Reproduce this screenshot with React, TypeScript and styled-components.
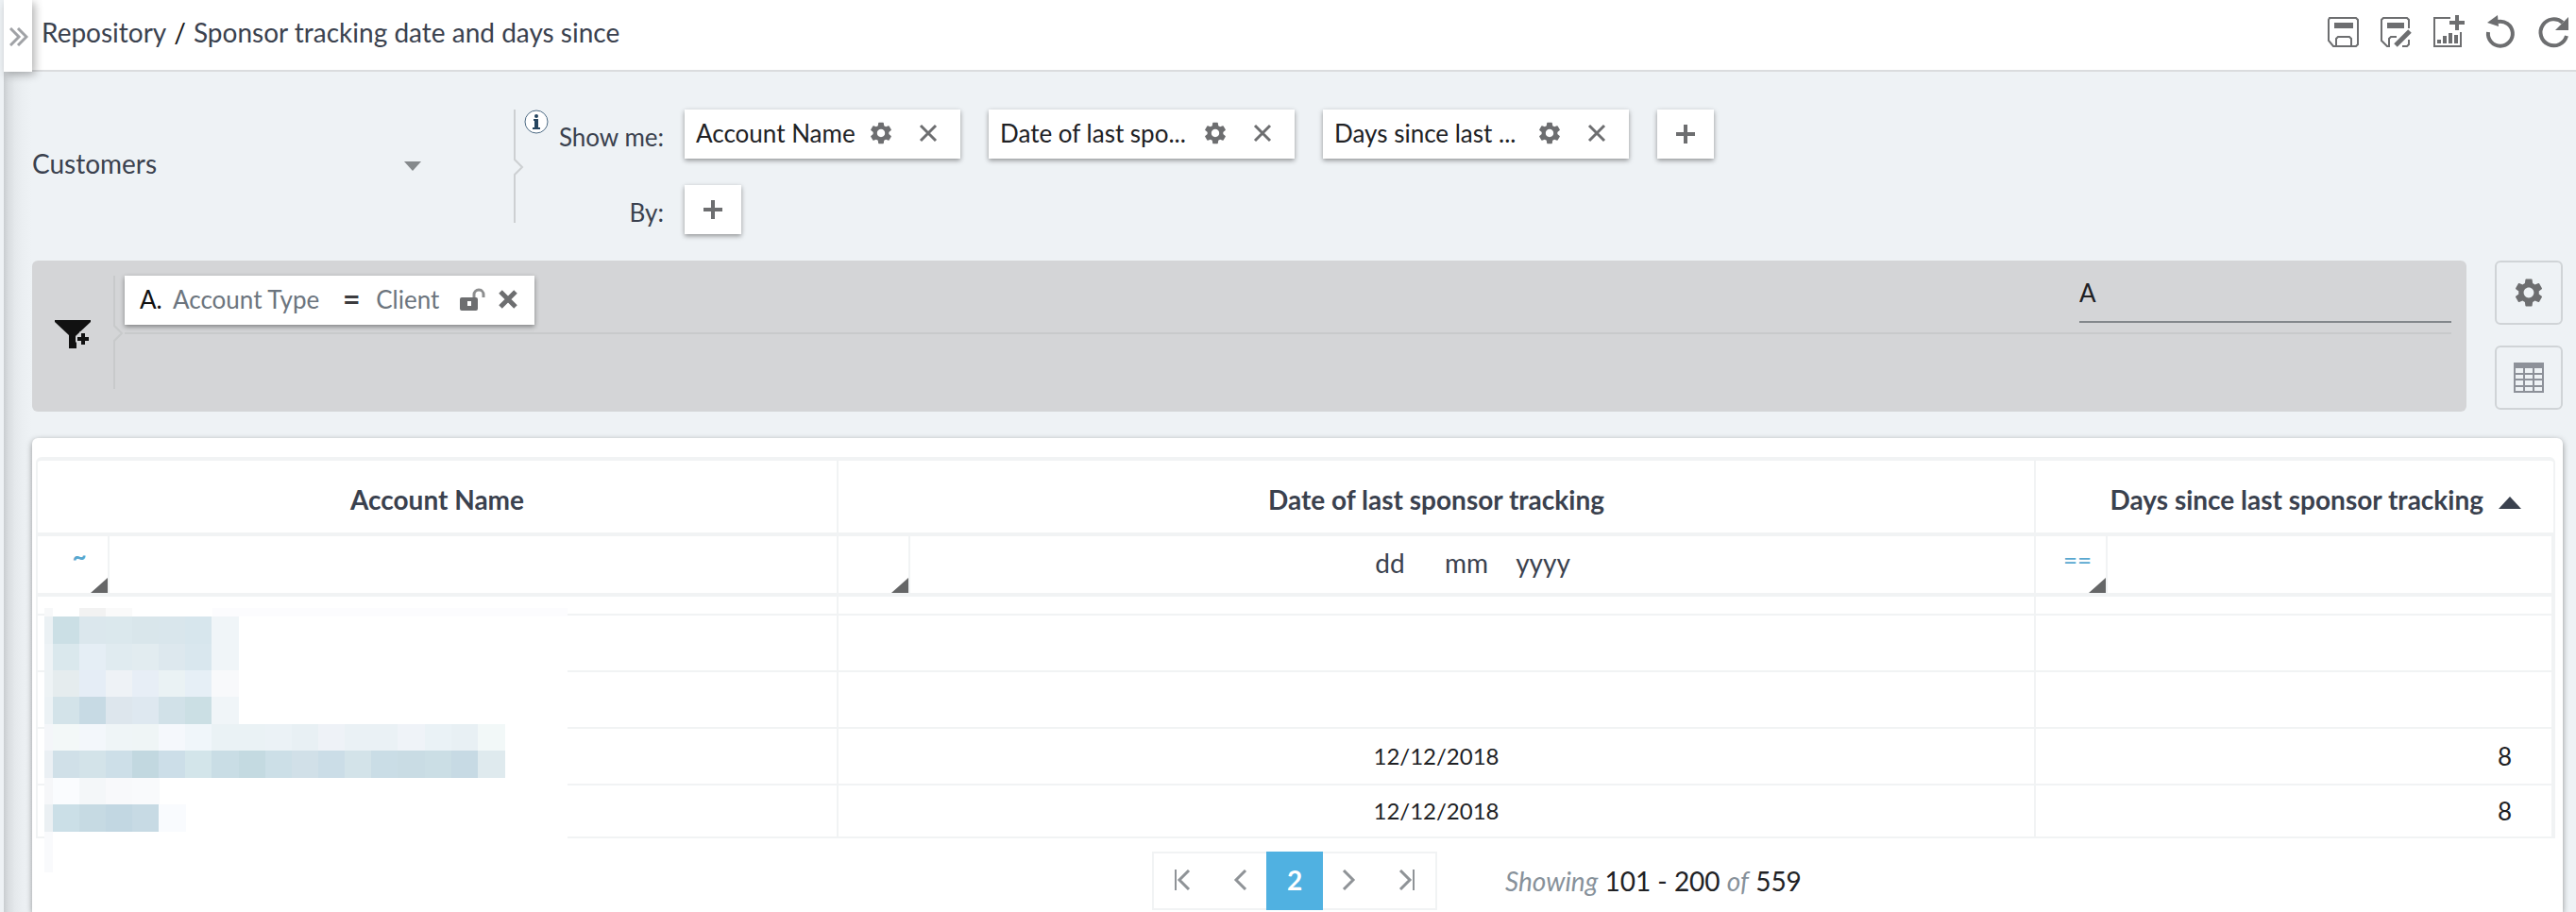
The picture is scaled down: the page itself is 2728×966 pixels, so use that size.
import React from "react";
import styled, { createGlobalStyle, css } from "styled-components";
import { MdSettings } from "react-icons/md";

const GlobalStyle = createGlobalStyle`
  *, *::before, *::after { box-sizing: border-box; }
  body {
    margin: 0;
    background: #eef2f5;
    font-family: Lato, "Liberation Sans", sans-serif;
    font-size: 26px;
    line-height: 32px;
    color: #202124;
  }
  button, input, select { font: inherit; color: inherit; }
  button { cursor: pointer; }
`;

const ink = "#3a414e";
const line = "#f1f3f4";
const iconGrey = "#6d6e70";

const Shell = styled.div`
  display: flex;
  min-height: 100vh;
  padding-left: 4px;
`;

const Main = styled.main`
  flex: 1;
  min-width: 0;
  display: flex;
  flex-direction: column;
  background: linear-gradient(90deg, #c9cdd0 0, #d9dde0 5px, #e5e9ec 12px, #ebeff2 20px, #eef2f5 30px);
`;

const TopBar = styled.header`
  display: flex;
  align-items: center;
  height: 76px;
  padding-right: 6px;
  background: #fff;
  border-bottom: 2px solid #dadcde;
`;

const Flap = styled.button`
  position: relative;
  z-index: 1;
  align-self: flex-start;
  width: 30px;
  height: 76px;
  padding: 2px 0 0;
  border: 0;
  background: #fff;
  box-shadow: 3px 3px 10px rgba(0, 0, 0, 0.3);
  svg { display: block; margin: 0 auto 0 6px; }
`;

const Crumbs = styled.nav`
  display: flex;
  gap: 8px;
  flex: 1;
  padding-left: 10px;
  padding-bottom: 6px;
  font-size: 28px;
  color: ${ink};
  a { color: inherit; text-decoration: none; }
`;

const Slash = styled.span`
  color: #111;
`;

const Tools = styled.div`
  display: flex;
  gap: 20px;
  padding-bottom: 6px;
`;

const IconButton = styled.button`
  display: grid;
  place-items: center;
  padding: 0;
  border: 0;
  background: none;
  color: ${iconGrey};
  svg { display: block; }
`;

const Query = styled.section`
  display: flex;
  padding: 40px 14px 28px 30px;
`;

const SourceBox = styled.div`
  display: grid;
  align-items: center;
  width: 412px;
  margin-right: 98px;
  height: 120px;
`;

const SourceSelect = styled.select`
  grid-area: 1 / 1;
  appearance: none;
  width: 100%;
  padding: 0 0 6px;
  border: 0;
  background: none;
  font-size: 28px;
  color: ${ink};
`;

const Caret = styled.svg`
  grid-area: 1 / 1;
  justify-self: end;
  pointer-events: none;
`;

const InfoButton = styled(IconButton)`
  align-self: flex-start;
`;

const Fields = styled.div`
  display: grid;
  grid-template-columns: 122px auto;
  column-gap: 22px;
  row-gap: 28px;
`;

const FieldLabel = styled.span`
  padding-top: 13px;
  text-align: right;
  white-space: nowrap;
  color: ${ink};
`;

const Chips = styled.div`
  display: flex;
  gap: 30px;
`;

const raised = css`
  height: 52px;
  border: 0;
  background: #fff;
  box-shadow: 0 2px 5px rgba(0, 0, 0, 0.4);
`;

const Chip = styled.div<{ $wide?: boolean }>`
  ${raised}
  display: flex;
  align-items: center;
  justify-content: space-between;
  width: ${p => (p.$wide ? 324 : 292)}px;
  padding: 0 24px 2px 12px;
`;

const ChipText = styled.span`
  white-space: nowrap;
`;

const ChipActions = styled.div`
  display: flex;
  gap: 26px;
`;

const AddButton = styled.button`
  ${raised}
  display: grid;
  place-items: center;
  width: 60px;
  padding: 0;
  color: ${iconGrey};
`;

const FilterRow = styled.section`
  display: flex;
  align-items: flex-start;
  gap: 30px;
  padding: 0 14px 28px 30px;
`;

const FilterPanel = styled.div`
  flex: 1;
  display: flex;
  height: 160px;
  padding: 16px 16px 0 24px;
  border-radius: 6px;
  background: #d4d5d7;
`;

const FunnelButton = styled(IconButton)`
  align-self: flex-start;
  margin-top: 46px;
  margin-right: 24px;
`;

const FilterLines = styled.div`
  flex: 1;
  display: flex;
  justify-content: space-between;
  height: 62px;
  margin-left: 1px;
  border-bottom: 2px solid #c8cacb;
`;

const FilterChip = styled.div`
  ${raised}
  display: flex;
  align-items: center;
  padding: 0 18px 2px 16px;
  color: #6c757e;
  white-space: nowrap;
`;

const FilterLetter = styled.span`
  width: 35px;
  color: #111;
`;

const Operator = styled.span`
  width: 60px;
  padding-left: 8px;
  text-align: center;
  font-size: 32px;
  font-weight: 700;
  color: #3c3c3f;
`;

const FilterValue = styled.span`
  margin-right: 22px;
`;

const FilterActions = styled.div`
  display: flex;
  gap: 14px;
`;

const LogicInput = styled.input`
  width: 394px;
  height: 50px;
  padding: 0 0 12px;
  border: 0;
  border-bottom: 2px solid #83888c;
  border-radius: 0;
  background: none;
  color: #202124;
`;

const SideTools = styled.div`
  display: flex;
  flex-direction: column;
  gap: 22px;
`;

const SquareButton = styled(IconButton)`
  width: 72px;
  height: 68px;
  border: 2px solid #d0d4d7;
  border-radius: 6px;
`;

const Card = styled.section`
  position: relative;
  flex: 1;
  margin: 0 14px 0 30px;
  padding: 20px 8px 2px 4px;
  border-radius: 6px 6px 0 0;
  background: #fff;
  box-shadow: 0 2px 6px rgba(0, 0, 0, 0.4);
`;

const Table = styled.table`
  width: 100%;
  table-layout: fixed;
  border-spacing: 0;
  border: 2px solid ${line};
  border-top-width: 4px;
  border-radius: 6px 6px 0 0;
  th, td { padding: 0; }
  th:not(:last-child), td { border-right: 2px solid ${line}; }
`;

const HeadCell = styled.th<{ $right?: boolean }>`
  height: 80px;
  border-bottom: 4px solid ${line};
  font-size: 28px;
  font-weight: 700;
  color: ${ink};
  text-align: ${p => (p.$right ? "right" : "center")};
`;

const SortButton = styled.button<{ $right?: boolean }>`
  padding: 12px ${p => (p.$right ? 34 : 0)}px 6px 0;
  border: 0;
  background: none;
  svg { margin-left: 16px; vertical-align: 1px; }
`;

const FilterCell = styled.td`
  height: 64px;
  border-bottom: 4px solid ${line};
`;

const FilterBox = styled.div`
  display: flex;
  height: 60px;
`;

const OperatorButton = styled.button`
  position: relative;
  width: 76px;
  padding: 0 0 10px 14px;
  border: 0;
  border-right: 2px solid ${line};
  background: none;
  font-size: 26px;
  color: #58a8d0;
  &::after {
    content: "";
    position: absolute;
    right: 0;
    bottom: 0;
    border-left: 18px solid transparent;
    border-bottom: 16px solid #656667;
  }
`;

const Tilde = styled.span`
  display: block;
  padding-bottom: 8px;
  font-weight: 700;
`;

const FilterInput = styled.input`
  flex: 1;
  min-width: 0;
  padding: 0 12px;
  border: 0;
  background: none;
`;

const DateInputs = styled.div`
  flex: 1;
  display: flex;
  justify-content: center;
  padding-right: 12px;
  padding-bottom: 4px;
`;

const DatePart = styled.input<{ $chars: number }>`
  width: ${p => p.$chars * 18}px;
  padding: 0;
  border: 0;
  background: none;
  text-align: center;
  font-size: 28px;
  color: ${ink};
  &::placeholder { color: ${ink}; opacity: 1; }
`;

const BodyRow = styled.tr<{ $height: number }>`
  td {
    height: ${p => p.$height}px;
    border-bottom: 2px solid ${line};
  }
  &:last-child td { border-bottom: 0; }
`;

const DateCell = styled.td`
  text-align: center;
  font-size: 24px;
`;

const NumberCell = styled.td`
  text-align: right;
  && { padding-right: 42px; }
`;

const Redaction = styled.svg`
  position: absolute;
  left: 13px;
  top: 180px;
`;

const Footer = styled.footer`
  display: flex;
  align-items: center;
  justify-content: center;
  gap: 72px;
  padding: 14px 0 0 470px;
`;

const Pager = styled.nav`
  display: flex;
  border: 2px solid ${line};
`;

const PageButton = styled.button<{ $active?: boolean }>`
  display: grid;
  place-items: center;
  width: 60px;
  height: ${p => (p.$active ? 62 : 58)}px;
  margin: ${p => (p.$active ? "-2px -1px" : "0")};
  padding: 0 0 2px;
  border: 0;
  background: ${p => (p.$active ? "#50b1e1" : "none")};
  color: ${p => (p.$active ? "#fff" : "#8f9397")};
  font-size: 28px;
  font-weight: 700;
  & + & { border-left: ${p => (p.$active ? "0" : `2px solid ${line}`)}; }
`;

const Range = styled.p`
  width: 400px;
  margin: 0;
  font-size: 28px;
  white-space: nowrap;
  em { color: #87919a; }
`;

const Cross = ({ bold = false }: { bold?: boolean }) => (
  <svg width="20" height="28" viewBox="0 0 20 28" fill="none" stroke="currentColor" strokeWidth={bold ? 5 : 3}>
    <path d="M2 6 18 22M18 6 2 22" />
  </svg>
);

const Plus = () => (
  <svg width="20" height="22" viewBox="0 0 20 22" fill="none" stroke="currentColor" strokeWidth="4">
    <path d="M0 11H20M10 1V21" />
  </svg>
);

const Save = () => (
  <svg width="36" height="36" viewBox="0 0 36 36" fill="none" stroke="currentColor" strokeWidth="2">
    <path d="M5 3H33L35 5V31L33 33H9L4 27V5Z" />
    <path d="M12 33V25L14 23H26L28 25V33" />
    <path d="M10 11H30" strokeWidth="6" />
  </svg>
);

const SaveAs = () => (
  <svg width="36" height="36" viewBox="0 0 36 36" fill="none" stroke="currentColor" strokeWidth="2">
    <path d="M33 14V5L31 3H6L4 5V27L10 33H13M12 33V25L14 23H20M33 26V31L31 33H26" />
    <path d="M10 11H28" strokeWidth="6" />
    <path d="M19 32 34 17" strokeWidth="5" />
  </svg>
);

const ChartAdd = () => (
  <svg width="36" height="36" viewBox="0 0 36 36" fill="none" stroke="currentColor" strokeWidth="2">
    <path d="M21 3H4V33H32V18" />
    <path d="M20 8H36M28 0V16" strokeWidth="4" />
    <path d="M9 30V26M15 30V22M21 30V19M27 30V21" strokeWidth="4" />
  </svg>
);

const Undo = () => (
  <svg width="36" height="36" viewBox="0 0 36 36" fill="none" stroke="currentColor" strokeWidth="4">
    <path d="M5 18A13 13 0 1 0 15 7" />
    <path d="M4 8 15 0 16 12Z" fill="currentColor" stroke="none" />
  </svg>
);

const Redo = () => (
  <svg width="36" height="36" viewBox="0 0 36 36" fill="none" stroke="currentColor" strokeWidth="4">
    <path d="M32 22A14 14 0 1 1 28 8" />
    <path d="M34 2V16H20Z" fill="currentColor" stroke="none" />
  </svg>
);

const OpenLock = () => (
  <svg width="27" height="28" viewBox="0 -2 27 28" fill="none">
    <path d="M15 11V7A5 5 0 0 1 25 7V10" stroke="#8d8e8f" strokeWidth="3" />
    <path fillRule="evenodd" d="M2 10H17Q19 10 19 12V22Q19 24 17 24H2Q0 24 0 22V12Q0 10 2 10ZM8 14V19H12V14Z" fill="currentColor" />
  </svg>
);

const Funnel = () => (
  <svg width="38" height="32" viewBox="0 0 38 32">
    <path d="M0 1H38V3L23 17V31H15V17L0 3Z" fill="#111" />
    <path d="M30 13V28M22 21H37" stroke="#d4d5d7" strokeWidth="7" />
    <path d="M30 15V27M24 21H36" stroke="#111" strokeWidth="4" />
  </svg>
);

const Notch = ({ color }: { color: string }) => (
  <svg width="11" height="120" viewBox="0 0 11 120" fill="none" stroke={color} strokeWidth="2">
    <path d="M1 0V53L9 61 1 69V120" />
  </svg>
);

const Grid = () => (
  <svg width="32" height="32" viewBox="0 0 32 32" fill="none" stroke="#8d9199" strokeWidth="2">
    <path d="M1 1H31V31H1ZM11 6V31M21 6V31M1 12H31M1 18H31M1 25H31" />
    <path d="M0 3H32" strokeWidth="6" />
  </svg>
);

const Info = () => (
  <svg width="26" height="26" viewBox="0 0 26 26">
    <circle cx="13" cy="13" r="12" fill="#fff" stroke="#4d6b84" />
    <circle cx="13" cy="7" r="2" fill="#25455f" />
    <path d="M10 10H15V19H17V21H9V19H11V12H10Z" fill="#25455f" />
  </svg>
);

const Chevron = ({ back = false, bar = false }: { back?: boolean; bar?: boolean }) => (
  <svg width="18" height="22" viewBox="0 0 18 22" fill="none" stroke="currentColor" strokeWidth="3">
    <path d={back ? "M16 1 6 11 16 21" : "M2 1 12 11 2 21"} />
    {bar && <path d={back ? "M2 0V22" : "M16 0V22"} strokeWidth="2" />}
  </svg>
);

const mosaic: string[][] = [
  ["cbdfe5", "dbe7ed", "dbe8ed", "d9e6eb", "d9e6ec", "d7e6ed", "f0f5f8"],
  ["dae8ed", "e5eef5", "e0ebf0", "e2ecf0", "dde8ee", "d9e7ee", "f0f5f8"],
  ["e5ecee", "e5edf6", "eef2f6", "e7eef6", "eaf2f4", "e6eff6", "f8f9fb"],
  ["d3e3e9", "c7dae4", "dde6ed", "dee8f0", "d1e1e8", "cbdfe4", "f0f5f8"],
  ["f3f8f8", "f3f7fb", "eff5f7", "eff5f6", "f5f8fc", "f0f6fa", "eaf2f5", "eaf2f5", "ebf2f6", "e8f0f4", "eef2f7", "eaf1f5", "eaf1f5", "eff3f8", "eaf2f6", "e8f0f4", "f2f8f8"],
  ["d0e0e8", "d3e3e9", "cddfe8", "c2d8e0", "ccdee8", "d3e5ea", "c9dde5", "c4dae1", "ccdfe7", "d1e0e8", "cbdde7", "d3e3e9", "cadde6", "c9dce4", "cbdee5", "c7dae4", "dfeaee"],
  ["fafcfe", "f4f7f9", "f8f9fb", "f9fafc"],
  ["cbdfe7", "c6dae3", "c2d7e2", "c7dae4", "f9fbfe"],
];
const rowTops = [9, 38, 66, 94, 123, 151, 180, 208, 237];
const edge = ["ebf1f4", "eef3f6", "eef3f5", "ecf2f5", "f4f6f9", "ebf0f4", "f6f7f9", "ebf0f3"];

const RedactedNames = () => (
  <Redaction width="554" height="280" viewBox="0 0 554 280" shapeRendering="crispEdges" role="img" aria-label="Redacted account names">
    <rect width="554" height="280" fill="#fff" />
    <rect y="0" width="9" height="9" fill="#f7f8f9" />
    <rect x="37" width="28" height="9" fill="#f2f2f2" />
    <rect x="65" width="28" height="9" fill="#fafafa" />
    <rect x="178" width="376" height="9" fill="#fcfcfe" />
    <rect y="237" width="9" height="43" fill="#f9fafc" />
    {mosaic.map((row, r) => (
      <g key={r}>
        <rect y={rowTops[r]} width="9" height={rowTops[r + 1] - rowTops[r]} fill={`#${edge[r]}`} />
        {row.map((c, i) => (
          <rect key={i} x={9 + i * 28 + Math.floor(i / 7)} y={rowTops[r]} width="29" height={rowTops[r + 1] - rowTops[r]} fill={`#${c}`} />
        ))}
      </g>
    ))}
  </Redaction>
);

const fields = [
  { text: "Account Name", wide: false },
  { text: "Date of last spo...", wide: true },
  { text: "Days since last ...", wide: true },
];

const rows = [
  { height: 20, date: "", days: "" },
  { height: 60, date: "", days: "" },
  { height: 60, date: "", days: "" },
  { height: 60, date: "12/12/2018", days: "8" },
  { height: 54, date: "12/12/2018", days: "8" },
];

export default function App() {
  return (
    <>
      <GlobalStyle />
      <Shell>
        <Main>
          <TopBar>
            <Flap aria-label="Expand sidebar">
              <svg width="20" height="20" viewBox="0 0 20 20" fill="none" stroke="#a0a2a6" strokeWidth="3">
                <path d="M1 1 10 10 1 19M9 1 18 10 9 19" />
              </svg>
            </Flap>
            <Crumbs aria-label="Breadcrumb">
              <a href="#repository">Repository</a>
              <Slash>/</Slash>
              <span>Sponsor tracking date and days since</span>
            </Crumbs>
            <Tools>
              <IconButton aria-label="Save"><Save /></IconButton>
              <IconButton aria-label="Save as"><SaveAs /></IconButton>
              <IconButton aria-label="Add chart"><ChartAdd /></IconButton>
              <IconButton aria-label="Undo"><Undo /></IconButton>
              <IconButton aria-label="Refresh"><Redo /></IconButton>
            </Tools>
          </TopBar>

          <Query>
            <SourceBox>
              <SourceSelect aria-label="Data source">
                <option>Customers</option>
              </SourceSelect>
              <Caret width="18" height="10" viewBox="0 0 18 10"><path d="M0 0H18L9 10Z" fill="#85898c" /></Caret>
            </SourceBox>
            <Notch color="#cdd0d2" />
            <InfoButton aria-label="About this query"><Info /></InfoButton>
            <Fields>
              <FieldLabel>Show me:</FieldLabel>
              <Chips>
                {fields.map(f => (
                  <Chip key={f.text} $wide={f.wide}>
                    <ChipText>{f.text}</ChipText>
                    <ChipActions>
                      <IconButton aria-label={`Settings for ${f.text}`}><MdSettings size={28} /></IconButton>
                      <IconButton aria-label={`Remove ${f.text}`}><Cross /></IconButton>
                    </ChipActions>
                  </Chip>
                ))}
                <AddButton aria-label="Add field"><Plus /></AddButton>
              </Chips>
              <FieldLabel>By:</FieldLabel>
              <Chips>
                <AddButton aria-label="Add grouping"><Plus /></AddButton>
              </Chips>
            </Fields>
          </Query>

          <FilterRow>
            <FilterPanel>
              <FunnelButton aria-label="Add filter"><Funnel /></FunnelButton>
              <Notch color="#c8cacb" />
              <FilterLines>
                <FilterChip>
                  <FilterLetter>A.</FilterLetter>
                  <span>Account Type</span>
                  <Operator>=</Operator>
                  <FilterValue>Client</FilterValue>
                  <FilterActions>
                    <IconButton aria-label="Lock filter"><OpenLock /></IconButton>
                    <IconButton aria-label="Remove filter"><Cross bold /></IconButton>
                  </FilterActions>
                </FilterChip>
                <LogicInput aria-label="Filter logic" defaultValue="A" />
              </FilterLines>
            </FilterPanel>
            <SideTools>
              <SquareButton aria-label="Settings"><MdSettings size={36} /></SquareButton>
              <SquareButton aria-label="Table view"><Grid /></SquareButton>
            </SideTools>
          </FilterRow>

          <Card>
            <Table>
              <colgroup>
                <col width="848" />
                <col />
                <col width="548" />
              </colgroup>
              <thead>
                <tr>
                  <HeadCell scope="col"><SortButton>Account Name</SortButton></HeadCell>
                  <HeadCell scope="col"><SortButton>Date of last sponsor tracking</SortButton></HeadCell>
                  <HeadCell scope="col" $right aria-sort="ascending">
                    <SortButton $right>
                      Days since last sponsor tracking
                      <svg width="24" height="13" viewBox="0 0 24 13"><path d="M12 0 24 13H0Z" fill={ink} /></svg>
                    </SortButton>
                  </HeadCell>
                </tr>
                <tr>
                  <FilterCell>
                    <FilterBox>
                      <OperatorButton aria-label="Name operator"><Tilde>~</Tilde></OperatorButton>
                      <FilterInput aria-label="Account name filter" />
                    </FilterBox>
                  </FilterCell>
                  <FilterCell>
                    <FilterBox>
                      <OperatorButton aria-label="Date operator" />
                      <DateInputs>
                        <DatePart $chars={4} aria-label="Day" placeholder="dd" />
                        <DatePart $chars={5} aria-label="Month" placeholder="mm" />
                        <DatePart $chars={4} aria-label="Year" placeholder="yyyy" />
                      </DateInputs>
                    </FilterBox>
                  </FilterCell>
                  <FilterCell>
                    <FilterBox>
                      <OperatorButton aria-label="Days operator">==</OperatorButton>
                      <FilterInput aria-label="Days filter" />
                    </FilterBox>
                  </FilterCell>
                </tr>
              </thead>
              <tbody>
                {rows.map((r, i) => (
                  <BodyRow key={i} $height={r.height}>
                    <td />
                    <DateCell>{r.date}</DateCell>
                    <NumberCell>{r.days}</NumberCell>
                  </BodyRow>
                ))}
              </tbody>
            </Table>
            <RedactedNames />
            <Footer>
              <Pager aria-label="Pages">
                <PageButton aria-label="First page"><Chevron back bar /></PageButton>
                <PageButton aria-label="Previous page"><Chevron back /></PageButton>
                <PageButton $active aria-current="page">2</PageButton>
                <PageButton aria-label="Next page"><Chevron /></PageButton>
                <PageButton aria-label="Last page"><Chevron bar /></PageButton>
              </Pager>
              <Range><em>Showing</em> 101 - 200 <em>of</em> 559</Range>
            </Footer>
          </Card>
        </Main>
      </Shell>
    </>
  );
}
